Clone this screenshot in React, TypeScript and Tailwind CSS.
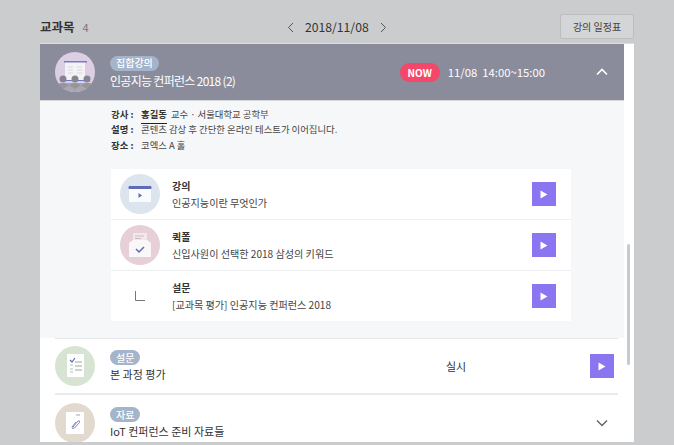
import React from "react";

const Play = () => (
  <div className="w-6 h-6 bg-[#8c75f0] flex items-center justify-center shrink-0">
    <svg width="8" height="9" viewBox="0 0 8 9"><path d="M0.5 0.5 L7.5 4.5 L0.5 8.5 Z" fill="#fff" /></svg>
  </div>
);

const Badge = ({ children }: { children: React.ReactNode }) => (
  <span className="inline-flex items-center justify-center h-[15px] px-[6px] rounded-full bg-[#a4b4ca] text-white text-[10px] font-medium leading-none self-start">{children}</span>
);

const Circle = ({ bg, children }: { bg: string; children: React.ReactNode }) => (
  <div className={`w-10 h-10 rounded-full flex items-center justify-center shrink-0 overflow-hidden ${bg}`}>{children}</div>
);

const Sub = ({ icon, title, text, last }: { icon: React.ReactNode; title: string; text: string; last?: boolean }) => (
  <div className={`flex items-center pl-[9px] pr-[15px] ${last ? "h-[50px]" : "h-[51px] border-b border-[#eeeff2]"}`}>
    <div className="w-10 flex justify-center shrink-0">{icon}</div>
    <div className="ml-3 flex-1 flex flex-col">
      <span className="text-[10px] font-bold leading-[17px] text-[#333]">{title}</span>
      <span className="text-[10.1px] leading-[17px] text-[#444]">{text}</span>
    </div>
    <Play />
  </div>
);

export default function App() {
  return (
    <div className="w-[674px] h-[445px] overflow-hidden bg-[#cbccce] px-10 pt-[12px] text-[#333]" style={{ fontFamily: '"Noto Sans CJK KR", "Noto Sans", sans-serif' }}>
      <div className="relative flex items-center h-[31px]">
        <span className="text-[12.5px] font-bold text-[#333]">교과목</span>
        <span className="ml-2 text-[11px] text-[#777]">4</span>
        <div className="absolute left-[247px] top-0 h-[31px] flex items-center gap-[11px]">
          <svg width="7" height="11" viewBox="0 0 7 11" fill="none" stroke="#555" strokeWidth="1"><path d="M6 1 L1.5 5.5 L6 10" /></svg>
          <span className="text-[12.2px] text-[#333]">2018/11/08</span>
          <svg width="7" height="11" viewBox="0 0 7 11" fill="none" stroke="#555" strokeWidth="1"><path d="M1 1 L5.5 5.5 L1 10" /></svg>
        </div>
        <button className="absolute right-0 top-[2px] w-[74px] h-[25px] bg-[#d4d5d6] border border-[#bcbdbf] rounded-[2px] text-[10px] text-[#444] flex items-center justify-center">강의 일정표</button>
      </div>

      <div className="relative h-[399px] bg-white border-t border-[#dcdde0] flex">
        <div className="w-[584px] shrink-0 h-full overflow-hidden">
          <div className="h-[57px] bg-[#8a8c9b] border-b border-[#d5d6da] flex items-center pl-[15px]">
            <Circle bg="bg-[#dccfe3]">
              <svg width="40" height="40" viewBox="0 0 40 40">
                <rect x="10" y="10" width="20" height="19" fill="#f3f3f5" />
                <rect x="9" y="9" width="23" height="1.5" fill="#7b78c4" />
                <path d="M13 15h5M22 15h5M13 18h5M22 18h5M13 21h5M22 21h5" stroke="#d8d9df" strokeWidth="1" />
                <rect x="11" y="28" width="18" height="1" fill="#6d79c9" />
                <path d="M0 40 V31 H40 V40 Z" fill="#a8a8b0" />
                <circle cx="8" cy="27" r="3.5" fill="#85858d" /><path d="M2 33 Q8 29 14 33 L8 37 Z" fill="#95959d" />
                <circle cx="20" cy="27" r="3.5" fill="#85858d" /><path d="M14 33 Q20 29 26 33 L20 37 Z" fill="#95959d" />
                <circle cx="32" cy="27" r="3.5" fill="#85858d" /><path d="M26 33 Q32 29 38 33 L32 37 Z" fill="#95959d" />
              </svg>
            </Circle>
            <div className="ml-[15px] flex flex-col gap-[1px]">
              <Badge>집합강의</Badge>
              <span className="text-[12px] leading-[17px] text-white tracking-[-0.7px]">인공지능 컨퍼런스 2018 (2)</span>
            </div>
            <div className="ml-auto flex items-center">
              <span className="w-10 h-[19px] rounded-full bg-[#f4476a] text-white text-[10px] font-bold flex items-center justify-center">NOW</span>
              <span className="ml-[8px] text-[11.3px] text-white whitespace-pre">11/08  14:00~15:00</span>
              <svg className="ml-[51px] mr-[16px]" width="12" height="8" viewBox="0 0 12 8" fill="none" stroke="#fff" strokeWidth="1.6"><path d="M1 6.5 L6 1.5 L11 6.5" /></svg>
            </div>
          </div>

          <div className="h-[237px] bg-[#f6f7f9] pl-[71px] pt-[5px]">
            <div className="flex flex-col text-[9.4px] leading-[16px] text-[#444]">
              <div className="flex"><b className="w-[30px] text-[#333]">강사 :</b><span className="font-bold text-[#333] border-b border-[#222] h-[18px] mr-1">홍길동</span><span>교수 · 서울대학교 공학부</span></div>
              <div className="flex -mt-[3px]"><b className="w-[30px] text-[#333]">설명 :</b><span>콘텐츠 감상 후 간단한 온라인 테스트가 이어집니다.</span></div>
              <div className="flex"><b className="w-[30px] text-[#333]">장소 :</b><span>코엑스 A 홀</span></div>
            </div>
            <div className="mt-[16px] w-[460px] bg-white">
              <Sub title="강의" text="인공지능이란 무엇인가" icon={
                <Circle bg="bg-[#dce4ee]">
                  <svg width="24" height="18" viewBox="0 0 24 18"><rect x="1" y="1" width="22" height="16" rx="1" fill="#fafbfd" /><rect x="0.5" y="1" width="23" height="3" rx="1" fill="#5f6bb5" /><path d="M10.5 8 L14 10.5 L10.5 13 Z" fill="#5f6bb5" /></svg>
                </Circle>} />
              <Sub title="퀵폴" text="신입사원이 선택한 2018 삼성의 키워드" icon={
                <Circle bg="bg-[#e6cfd7]">
                  <svg width="24" height="26" viewBox="0 0 24 26"><path d="M5 1 H19 V10 H5 Z" fill="#f2e8ec" /><path d="M7 4h9M7 6.5h6" stroke="#c9bcc4" /><path d="M1 11 L5 8 H19 L23 11 V25 H1 Z" fill="#faf7f8" /><path d="M8 17 L11 20 L16 15" fill="none" stroke="#5f6bb5" strokeWidth="1.5" /></svg>
                </Circle>} />
              <Sub last title="설문" text="[교과목 평가] 인공지능 컨퍼런스 2018" icon={
                <svg width="10" height="10" viewBox="0 0 10 10" fill="none" stroke="#777" strokeWidth="1"><path d="M0.5 0 V9.5 H10" /></svg>} />
            </div>
          </div>

          <div className="h-[57px] mr-[6px] ml-[15px] border-t border-b-2 border-t-[#e6e7ea] border-b-[#ebebee] flex items-center">
            <Circle bg="bg-[#d8e4d3]">
              <svg width="20" height="24" viewBox="0 0 20 24"><rect x="2" y="0" width="17" height="23" fill="#fff" /><path d="M5 6 L7 8 L10 4" fill="none" stroke="#5f6bb5" strokeWidth="1.2" /><path d="M10 8h7M10 12h7M10 16h7" stroke="#9aa59a" /><path d="M5 11h3M5 15h3M5 18h3" stroke="#b4bdb4" /></svg>
            </Circle>
            <div className="ml-[15px] flex flex-col gap-[1px] w-[336px]">
              <Badge>설문</Badge>
              <span className="text-[11px] leading-[16px] text-[#333]">본 과정 평가</span>
            </div>
            <span className="text-[11px] text-[#333]">실시</span>
            <div className="ml-auto mr-1"><Play /></div>
          </div>

          <div className="h-[48px] mr-[6px] ml-[15px] flex pt-[8px]">
            <Circle bg="bg-[#e3dacf]">
              <svg width="18" height="22" viewBox="0 0 18 22"><path d="M0 0 H18 V22 H0 Z" fill="#fff" /><path d="M10 3h4" stroke="#aaa" /><path d="M7 15 L12 9 Q14 8 13.5 10.5 L8.5 16 Q6 17.5 6 15 L10 10" fill="none" stroke="#7d86c6" strokeWidth="1" /></svg>
            </Circle>
            <div className="ml-[15px] flex flex-col gap-[1px] pt-[4px]">
              <Badge>자료</Badge>
              <span className="text-[11px] leading-[16px] text-[#333]">IoT 컨퍼런스 준비 자료들</span>
            </div>
            <svg className="ml-auto mr-[10px] mt-[16px]" width="12" height="8" viewBox="0 0 12 8" fill="none" stroke="#666" strokeWidth="1.5"><path d="M1 1.5 L6 6.5 L11 1.5" /></svg>
          </div>
        </div>
        <div className="absolute left-[587px] top-[200px] w-[3px] h-[121px] rounded-full bg-[#c9cacc]" />
      </div>
    </div>
  );
}
